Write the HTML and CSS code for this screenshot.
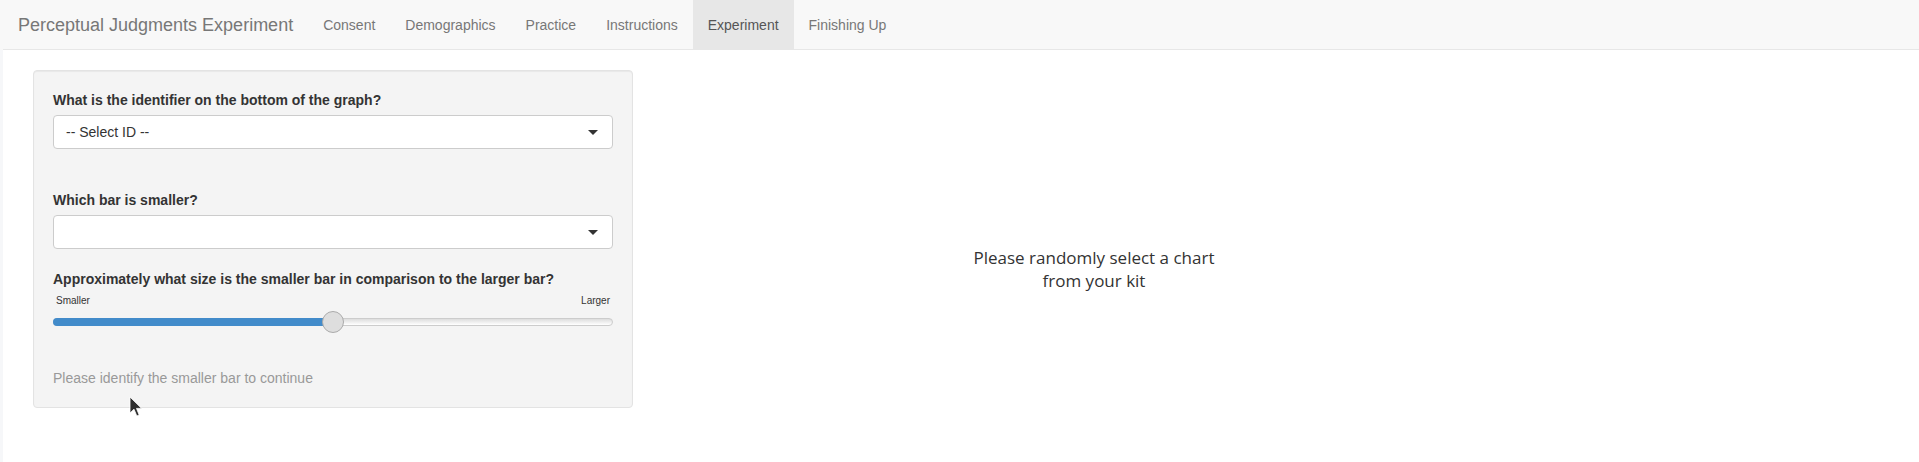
FILE: index.html
```html
<!DOCTYPE html>
<html lang="en">
<head>
<meta charset="utf-8">
<title>Perceptual Judgments Experiment</title>
<link rel="stylesheet" href="styles.css">
</head>
<body>
<nav class="navbar">
  <div class="navbar-inner">
    <span class="brand">Perceptual Judgments Experiment</span>
    <ul class="nav">
      <li><a>Consent</a></li>
      <li><a>Demographics</a></li>
      <li><a>Practice</a></li>
      <li><a>Instructions</a></li>
      <li class="active"><a>Experiment</a></li>
      <li><a>Finishing Up</a></li>
    </ul>
  </div>
</nav>
<div class="page">
  <div class="row">
    <aside class="well">
      <div class="form-group group-id">
        <label class="control-label">What is the identifier on the bottom of the graph?</label>
        <div class="select"><span class="select-text">-- Select ID --</span><span class="caret"></span></div>
      </div>
      <div class="form-group group-bar">
        <label class="control-label">Which bar is smaller?</label>
        <div class="select"><span class="select-text"></span><span class="caret"></span></div>
      </div>
      <div class="form-group group-slider">
        <label class="control-label">Approximately what size is the smaller bar in comparison to the larger bar?</label>
        <div class="irs">
          <div class="irs-labels"><span>Smaller</span><span>Larger</span></div>
          <div class="irs-track">
            <div class="irs-bar" style="width: 50%"></div>
            <div class="irs-handle" style="left: 50%"></div>
          </div>
        </div>
      </div>
      <p class="help">Please identify the smaller bar to continue</p>
    </aside>
    <main class="main">
      <div class="plot">
        <p class="prompt">Please randomly select a chart<br>from your kit</p>
      </div>
    </main>
  </div>
</div>
<svg class="cursor" width="14" height="22" viewBox="0 0 14 22" aria-hidden="true">
  <path d="M1 1 L1 17 L5 13.2 L7.8 20 L10.2 19 L7.5 12.4 L12.6 12.4 Z" fill="#2e2e2e" stroke="#ffffff" stroke-width="0.8" stroke-linejoin="round"/>
</svg>
</body>
</html>
```
FILE: styles.css
```css
* { box-sizing: border-box; }

html, body {
  margin: 0;
  padding: 0;
}

body {
  background: #f6f7f9;
  font-family: "Liberation Sans", Arial, Helvetica, sans-serif;
  font-size: 14px;
  line-height: 20px;
  color: #333;
  height: 462px;
  overflow: hidden;
  position: relative;
}

.navbar {
  background: #f8f8f8;
  height: 50px;
}

.navbar-inner {
  margin-left: 3px;
  height: 50px;
  border-bottom: 1px solid #e7e7e7;
  display: flex;
  align-items: stretch;
}

.brand {
  font-size: 18px;
  line-height: 20px;
  color: #777;
  padding: 15px 15px 14px 15px;
}

.nav {
  list-style: none;
  margin: 0;
  padding: 0;
  display: flex;
}

.nav li a {
  display: block;
  padding: 15px 15px 14px 15px;
  color: #777;
  font-size: 14px;
  line-height: 20px;
}

.nav li.active a {
  background: #e7e7e7;
  color: #555;
}

.page {
  margin-left: 3px;
  background: #fff;
  height: 412px;
  padding: 20px 15px 0 15px;
}

.row {
  display: flex;
  align-items: flex-start;
}

.well {
  width: 600px;
  margin-left: 15px;
  flex: none;
  background: #f4f4f4;
  border: 1px solid #e3e3e3;
  border-radius: 4px;
  box-shadow: inset 0 1px 1px rgba(0, 0, 0, 0.05);
  padding: 19px 19px 19px 19px;
}

.control-label {
  display: block;
  font-weight: bold;
  font-size: 14px;
  line-height: 20px;
  margin-bottom: 5px;
  color: #333;
}

.group-id { margin-bottom: 41px; }
.group-bar { margin-bottom: 20px; }
.group-slider { margin-bottom: 34px; }

.select {
  position: relative;
  height: 34px;
  background: #fff;
  border: 1px solid #ccc;
  border-radius: 4px;
  padding: 6px 12px;
  font-size: 14px;
  line-height: 20px;
  color: #333;
}

.caret {
  position: absolute;
  right: 14px;
  top: 14px;
  width: 0;
  height: 0;
  border-style: solid;
  border-width: 5px 5px 0 5px;
  border-color: #333 transparent transparent transparent;
}

.irs {
  position: relative;
  height: 40px;
  margin-top: 5px;
}

.irs-labels {
  display: flex;
  justify-content: space-between;
  font-size: 10px;
  line-height: 12px;
  color: #333;
  padding: 1px 3px;
}

.irs-track {
  position: relative;
  margin-top: 10px;
  height: 8px;
  border: 1px solid #ccc;
  border-radius: 16px;
  background: linear-gradient(to bottom, #dddddd 0%, #ffffff 100%);
}

.irs-bar {
  position: absolute;
  left: -1px;
  top: -1px;
  height: 8px;
  background: #428bca;
  border-radius: 16px 0 0 16px;
}

.irs-handle {
  position: absolute;
  top: -8px;
  width: 22px;
  height: 22px;
  margin-left: -11px;
  border: 1px solid #ababab;
  border-radius: 50%;
  background: #dedede;
}

.help {
  margin: 0;
  color: #999;
  font-size: 14px;
  line-height: 20px;
}

.main {
  flex: 1;
  padding-left: 15px;
}

.plot {
  width: 892px;
  height: 400px;
  padding-top: 176px;
}

.prompt {
  margin: 0;
  text-align: center;
  font-family: "Open Sans", "Noto Sans", sans-serif;
  font-size: 17px;
  line-height: 23px;
  color: #333;
}

.cursor {
  position: absolute;
  left: 129px;
  top: 396px;
}
```
